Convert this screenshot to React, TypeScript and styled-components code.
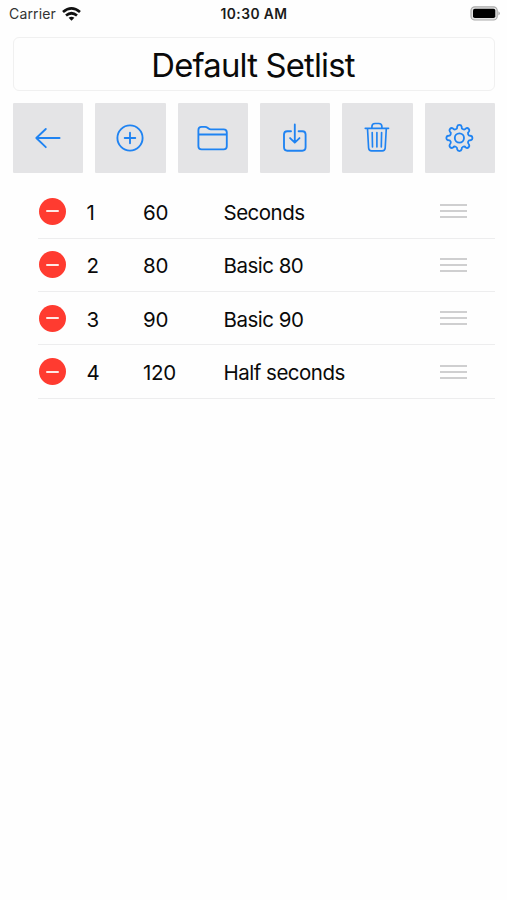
import React from "react";
import styled, { createGlobalStyle } from "styled-components";

const GlobalStyle = createGlobalStyle`
  * { box-sizing: border-box; }
  body { margin: 0; background: #fefefe; font-family: Inter, "Liberation Sans", sans-serif; color: #0a0a0a; }
`;

const Screen = styled.main`
  width: 507px;
  height: 900px;
  overflow: hidden;
  background: #fefefe;
`;

const StatusBar = styled.header`
  display: grid;
  grid-template-columns: 1fr auto 1fr;
  align-items: center;
  height: 27px;
  padding: 0 7px 0 9px;
`;

const Carrier = styled.div`
  display: flex;
  align-items: center;
  gap: 6px;
  font-size: 14px;
  letter-spacing: 0.15px;
  color: #333;
`;

const Clock = styled.time`
  margin-left: -1px;
  font-size: 13.8px;
  font-weight: 600;
  letter-spacing: 0.45px;
  color: #1a1a1a;
`;

const Battery = styled.svg`
  justify-self: end;
`;

const Title = styled.h1`
  display: flex;
  align-items: center;
  justify-content: center;
  height: 54px;
  margin: 10px 12px 0 13px;
  padding: 2px 2px 0 0;
  border: 1px solid #f0f0f0;
  border-radius: 6px;
  font-size: 32.8px;
  font-weight: 400;
  letter-spacing: -0.8px;
`;

const Toolbar = styled.nav`
  display: grid;
  grid-template-columns: repeat(6, 1fr);
  column-gap: 12px;
  margin: 11.5px 12px 0 13px;
`;

const ToolButton = styled.button`
  display: flex;
  align-items: center;
  justify-content: center;
  height: 70px;
  padding: 0;
  border: 0;
  border-radius: 1px;
  background: #e4e4e6;
`;

const ToolIcon = styled.svg`
  fill: none;
  stroke: #1f83f2;
  stroke-width: 1.85;
  stroke-linecap: round;
  stroke-linejoin: round;
`;

const List = styled.ul`
  list-style: none;
  margin: 12.8px 12px 0 37.5px;
  padding: 0;
`;

const Row = styled.li`
  display: grid;
  grid-template-columns: 48px 56.5px 80.5px 1fr 27px;
  align-items: center;
  height: 53.4px;
  padding: 0 28px 0 1px;
  border-bottom: 1.4px solid #ededee;
  font-size: 20.5px;
`;

const RemoveButton = styled.button`
  display: flex;
  align-items: center;
  justify-content: center;
  width: 27px;
  height: 27px;
  padding: 0;
  border: 0;
  border-radius: 50%;
  background: #ff3b30;
`;

const Minus = styled.span`
  width: 13px;
  height: 2px;
  border-radius: 1px;
  background: #ffe9e6;
`;

const Cell = styled.span<{ $tracking?: number }>`
  padding-top: 2px;
  white-space: nowrap;
  letter-spacing: ${(p) => p.$tracking ?? 0}px;
`;

const Grip = styled.span`
  display: flex;
  flex-direction: column;
  gap: 4px;
`;

const GripLine = styled.i`
  height: 2px;
  background: #cfcfd0;
`;

const polar = (radius: number, degrees: number) => {
  const a = (degrees * Math.PI) / 180;
  return `${(34.4 + radius * Math.sin(a)).toFixed(2)} ${(35 - radius * Math.cos(a)).toFixed(2)}`;
};

const gearPath =
  `M${polar(11.5, -11.25)}` +
  Array.from({ length: 8 }, (_, i) => {
    const a = i * 45;
    return `A2.3 2.3 0 0 1 ${polar(11.5, a + 11.25)}A2.3 2.3 0 0 0 ${polar(11.5, a + 33.75)}`;
  }).join("") +
  "Z";

const tools = [
  { name: "Back", art: <path d="M46.6 35H23.3M32.8 26L23.3 35l9.5 9.2" /> },
  { name: "Add", art: <><circle cx="35" cy="35" r="12.6" /><path d="M35 29.7v10.6M29.7 35h10.6" /></> },
  { name: "Open", art: <path d="M20.4 43.2V27q0-3.2 3.2-3.2h3.4q1.4 0 2.5.9l1 .8q1 .8 2.3.8H45.6q3.2 0 3.2 3.2v13.7q0 3.1-3.2 3.1H23.6q-3.2 0-3.2-3.1ZM20.4 31.5h28.4" /> },
  { name: "Import", art: <path d="M31 28.2h-3.7q-3.3 0-3.3 3.3v12.6q0 3.6 3.3 3.6h15q3.3 0 3.3-3.6V31.5q0-3.3-3.3-3.3h-3.7M34.8 21.5v18M30.1 35.1l4.7 4.6 4.7-4.6" /> },
  { name: "Delete", art: <path d="M23.2 25.3h23.4M29.9 25v-1.3q0-3.2 3.2-3.2h3.6q3.2 0 3.2 3.2V25M25.5 25.5l1.1 19.5q.2 2.9 3 2.9h10.6q2.8 0 3-2.9l1.1-19.5M30.2 29.5l.3 14.4M34.9 29.5v14.4M39.6 29.5l-.3 14.4" strokeWidth="1.65" /> },
  { name: "Settings", art: <><path d={gearPath} /><circle cx="34.4" cy="35" r="4.6" /></> },
];

const songs = [
  { position: 1, tempo: 60, title: "Seconds" },
  { position: 2, tempo: 80, title: "Basic 80" },
  { position: 3, tempo: 90, title: "Basic 90" },
  { position: 4, tempo: 120, title: "Half seconds" },
];

export default function App() {
  return (
    <Screen>
      <GlobalStyle />
      <StatusBar>
        <Carrier>
          Carrier
          <svg width="19" height="14" viewBox="0 0 19 14" fill="none" stroke="#111" strokeWidth="2.7">
            <path d="M1 5q8.5-7.2 17 0M4 8.5q5.5-4.5 11 0" />
            <path d="M6.6 10.8q2.9-2.3 5.8 0L9.5 13.7Z" fill="#111" stroke="none" />
          </svg>
        </Carrier>
        <Clock>10:30 AM</Clock>
        <Battery width="31" height="15" viewBox="0 0 31 15">
          <rect x="2" y=".8" width="26.2" height="13.2" rx="3.8" fill="#e4e4e4" stroke="#aaa" strokeWidth="1.2" />
          <rect x="4" y="2.8" width="22.3" height="9.2" rx="1.8" fill="#000" />
          <path d="M29.4 5.2q3 2.2 0 4.4Z" fill="#aaa" />
        </Battery>
      </StatusBar>
      <Title>Default Setlist</Title>
      <Toolbar>
        {tools.map((tool) => (
          <ToolButton key={tool.name} aria-label={tool.name}>
            <ToolIcon width="70" height="70" viewBox="0 0 70 70">{tool.art}</ToolIcon>
          </ToolButton>
        ))}
      </Toolbar>
      <List>
        {songs.map((song) => (
          <Row key={song.position}>
            <RemoveButton aria-label={`Remove ${song.title}`}><Minus /></RemoveButton>
            <Cell>{song.position}</Cell>
            <Cell $tracking={-0.3}>{song.tempo}</Cell>
            <Cell $tracking={-0.5}>{song.title}</Cell>
            <Grip><GripLine /><GripLine /><GripLine /></Grip>
          </Row>
        ))}
      </List>
    </Screen>
  );
}
